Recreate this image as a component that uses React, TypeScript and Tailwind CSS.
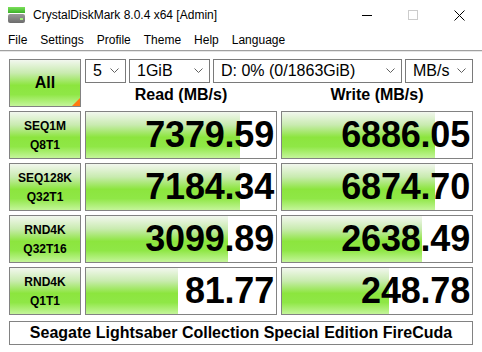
import React from "react";

type Row = {
  line1: string;
  line2: string;
  read: string;
  readBar: number;
  write: string;
  writeBar: number;
};

const rows: Row[] = [
  { line1: "SEQ1M", line2: "Q8T1", read: "7379.59", readBar: 154, write: "6886.05", writeBar: 153 },
  { line1: "SEQ128K", line2: "Q32T1", read: "7184.34", readBar: 154, write: "6874.70", writeBar: 153 },
  { line1: "RND4K", line2: "Q32T16", read: "3099.89", readBar: 142, write: "2638.49", writeBar: 140 },
  { line1: "RND4K", line2: "Q1T1", read: "81.77", readBar: 92, write: "248.78", writeBar: 107 },
];

const greenBg =
  "bg-[linear-gradient(to_bottom,#f2f7ee_0%,#c9ebb0_28%,#8ce53e_55%,#8fe746_75%,#c4f59a_100%)]";

const Chevron = () => (
  <svg width="9" height="6" viewBox="0 0 9 6" className="shrink-0">
    <polyline points="0.5,0.5 4.5,4.5 8.5,0.5" fill="none" stroke="#606060" strokeWidth="1" />
  </svg>
);

const Select = ({ label, w }: { label: string; w: string }) => (
  <div className={`${w} h-[24px] border border-[#7a7a7a] bg-white flex items-center justify-between pl-[7px] pr-[6px]`}>
    <span className="text-[16px] leading-none text-black">{label}</span>
    <Chevron />
  </div>
);

const ValueBox = ({ value, bar }: { value: string; bar: number }) => (
  <div className="relative h-[48px] border border-[#828282] bg-white flex items-center justify-end pr-[2px] overflow-hidden">
    <div className={`absolute left-0 top-0 bottom-0 ${greenBg}`} style={{ width: bar }} />
    <span className="relative text-[36px] font-bold leading-none text-black tracking-[-0.2px]">{value}</span>
  </div>
);

export default function App() {
  return (
    <div className="w-[482px] h-[352px] bg-white overflow-hidden font-['Liberation_Sans',Arial,sans-serif] text-black">
      {/* title bar */}
      <div className="h-[30px] flex items-center">
        <svg width="17" height="16" viewBox="0 0 17 16" className="ml-[8px]">
          <defs>
            <linearGradient id="tg" x1="0" y1="0" x2="0" y2="1">
              <stop offset="0" stopColor="#7be05a" />
              <stop offset="1" stopColor="#3bb02a" />
            </linearGradient>
            <linearGradient id="gg" x1="0" y1="0" x2="0" y2="1">
              <stop offset="0" stopColor="#9a9a9a" />
              <stop offset="1" stopColor="#6c6c6c" />
            </linearGradient>
          </defs>
          <rect x="0" y="0" width="17" height="6" fill="url(#tg)" />
          <rect x="0" y="7" width="17" height="9" rx="2" fill="url(#gg)" />
          <rect x="12" y="11" width="3" height="2" fill="#9ef07a" />
        </svg>
        <span className="ml-[8px] text-[12px] leading-none">CrystalDiskMark 8.0.4 x64 [Admin]</span>
        <div className="ml-auto flex items-center h-full">
          <div className="w-[46px] h-full flex items-center justify-center">
            <div className="w-[10px] h-[1px] bg-black" />
          </div>
          <div className="w-[46px] h-full flex items-center justify-center">
            <div className="w-[10px] h-[10px] border border-[#cccccc]" />
          </div>
          <div className="w-[46px] h-full flex items-center justify-center">
            <svg width="11" height="11" viewBox="0 0 11 11">
              <path d="M0.5 0.5 L10.5 10.5 M10.5 0.5 L0.5 10.5" stroke="#000" strokeWidth="1" />
            </svg>
          </div>
        </div>
      </div>

      {/* menu bar */}
      <div className="h-[20px] flex items-center gap-[13px] pl-[8px] text-[12px] leading-none">
        <span>File</span>
        <span>Settings</span>
        <span>Profile</span>
        <span>Theme</span>
        <span>Help</span>
        <span>Language</span>
      </div>
      <div className="h-[1px] bg-[#a0a0a0]" />
      <div className="h-[1px] bg-[#e6e6e6]" />

      {/* body */}
      <div className="pl-[9px] pt-[7px] grid grid-cols-[72px_192px_192px] gap-x-[4px] gap-y-[4px]">
        <div className={`relative h-[48px] border border-[#828282] ${greenBg} flex items-center justify-center`}>
          <span className="text-[16px] font-bold leading-none">All</span>
          <div className="absolute right-0 bottom-0 w-[8px] h-[8px] bg-[#ff7a10] [clip-path:polygon(100%_0,100%_100%,0_100%)]" />
        </div>
        <div className="col-span-2 flex flex-col h-[48px]">
          <div className="flex gap-[3px]">
            <Select label="5" w="w-[41px]" />
            <Select label="1GiB" w="w-[81px]" />
            <Select label="D: 0% (0/1863GiB)" w="w-[189px]" />
            <Select label="MB/s" w="w-[68px]" />
          </div>
          <div className="flex-1 grid grid-cols-[192px_192px] gap-x-[4px]">
            <div className="flex items-center justify-center text-[16px] font-bold leading-none">Read (MB/s)</div>
            <div className="flex items-center justify-center text-[16px] font-bold leading-none">Write (MB/s)</div>
          </div>
        </div>

        {rows.map((r, i) => (
          <React.Fragment key={i}>
            <div className={`h-[48px] border border-[#828282] ${greenBg} flex flex-col items-center justify-center gap-[7px] text-[12px] font-bold leading-none`}>
              <span>{r.line1}</span>
              <span>{r.line2}</span>
            </div>
            <ValueBox value={r.read} bar={r.readBar} />
            <ValueBox value={r.write} bar={r.writeBar} />
          </React.Fragment>
        ))}

        <div className="col-span-3 mt-[2px] h-[24px] border border-[#828282] bg-white flex items-center justify-center text-[16px] font-bold leading-none">
          Seagate Lightsaber Collection Special Edition FireCuda
        </div>
      </div>
    </div>
  );
}
